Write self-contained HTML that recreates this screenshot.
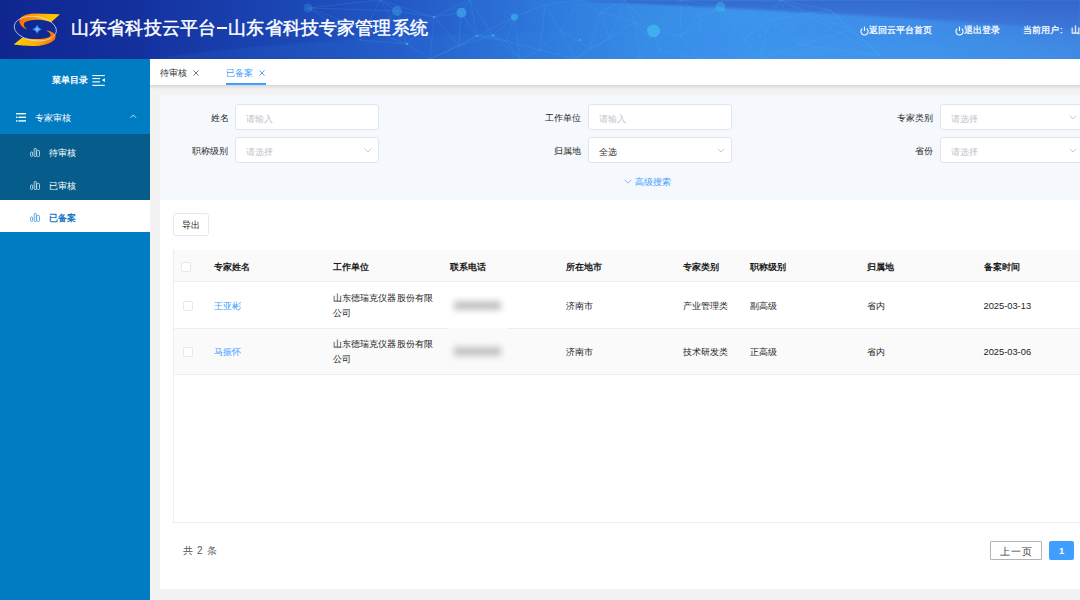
<!DOCTYPE html>
<html><head><meta charset="utf-8">
<style>
*{margin:0;padding:0;box-sizing:border-box}
html,body{width:1080px;height:600px;overflow:hidden;background:#f2f2f2;font-family:"Liberation Sans",sans-serif;color:#333}
.abs{position:absolute}
#hdr{position:absolute;left:0;top:0;width:1080px;height:59px;overflow:hidden;
 background:linear-gradient(90deg,#10288f 0%,#15339e 20%,#1d4cb6 35%,#2a6bd3 50%,#3484e2 62%,#3a82e0 75%,#3b73d6 100%)}
#title{position:absolute;left:71px;top:17px;font-size:18px;color:#fff;line-height:22px;white-space:nowrap;letter-spacing:0.15px;-webkit-text-stroke:0.45px #fff}
.dash{display:inline-block;width:12px;position:relative;height:10px}
.dash:after{content:"";position:absolute;left:0.5px;right:1px;top:2.8px;height:2.4px;background:#fff}
.hlink{position:absolute;top:23.5px;font-size:9.1px;color:#fff;line-height:12px;white-space:nowrap;-webkit-text-stroke:0.25px #fff}
#side{position:absolute;left:0;top:59px;width:150px;height:541px;background:#007cc3}
.sitem{position:absolute;left:0;width:150px;height:33px;background:#065d8b}
.stxt{position:absolute;left:49px;font-size:9.3px;line-height:12px;color:#fff;white-space:nowrap;letter-spacing:0.2px;margin-top:0.5px}
#tabs{position:absolute;left:150px;top:59px;width:930px;height:26px;background:#fff}
#tabsh{position:absolute;left:150px;top:85px;width:930px;height:4px;background:linear-gradient(#d8d8d8,#f2f2f2)}
.tab{position:absolute;top:8px;font-size:9.3px;line-height:12px;white-space:nowrap}
#search{position:absolute;left:160px;top:95px;width:930px;height:105px;background:#f5f8fc}
.lbl{position:absolute;font-size:9.3px;line-height:12px;color:#1f1f1f;white-space:nowrap;text-align:right}
.inp{position:absolute;width:143.5px;height:26px;background:#fff;border:1px solid #e2e5ec;border-radius:3px}
.ph{position:absolute;left:9.5px;top:7.5px;font-size:9.3px;line-height:12px;color:#c0c4cc;white-space:nowrap}
.chev{position:absolute;right:6px;top:10px;width:8px;height:5px}
#main{position:absolute;left:160px;top:200px;width:930px;height:389px;background:#fff}
#tbl{position:absolute;left:173px;top:249px;width:920px;height:274px;border:1px solid #eceef4;border-top:none;border-right:none}
.th{position:absolute;font-size:9.3px;line-height:12px;color:#1a1a1a;font-weight:bold;white-space:nowrap;margin-left:0.5px;margin-top:1px;letter-spacing:0.15px}
.td{position:absolute;margin-left:0.5px;margin-top:1px;font-size:9.3px;line-height:15px;color:#1c1c1c;letter-spacing:0.15px;white-space:nowrap}
.cb{position:absolute;width:9.5px;height:9.5px;border:1px solid #e6e8ec;border-radius:2px;background:#fff}
</style></head><body>
<div id="hdr">
 <svg class="abs" style="left:0;top:0" width="1080" height="59" viewBox="0 0 1080 59">
  <defs>
   <linearGradient id="hg" x1="0" y1="0" x2="1" y2="0">
    <stop offset="0" stop-color="#0f2690"/>
    <stop offset="0.12" stop-color="#13309d"/>
    <stop offset="0.26" stop-color="#1b46b4"/>
    <stop offset="0.37" stop-color="#2358c6"/>
    <stop offset="0.5" stop-color="#2e78dc"/>
    <stop offset="0.6" stop-color="#378ce6"/>
    <stop offset="0.69" stop-color="#3d94ec"/>
    <stop offset="0.85" stop-color="#3e8ce8"/>
    <stop offset="1" stop-color="#3e7edc"/>
   </linearGradient>
   <linearGradient id="topband" x1="0" y1="0" x2="0" y2="1">
    <stop offset="0" stop-color="#3260c8" stop-opacity="0.8"/>
    <stop offset="1" stop-color="#3a6ad0" stop-opacity="0.45"/>
   </linearGradient>
   <radialGradient id="glow" cx="0.5" cy="1" r="0.7">
    <stop offset="0" stop-color="#48a6f2" stop-opacity="0.5"/>
    <stop offset="1" stop-color="#48a6f2" stop-opacity="0"/>
   </radialGradient>
   <filter id="bl"><feGaussianBlur stdDeviation="1.2"/></filter><filter id="bl2" x="-50%" y="-50%" width="200%" height="200%"><feGaussianBlur stdDeviation="10"/></filter>
  </defs>
  <rect width="1080" height="59" fill="url(#hg)"/>
  <ellipse cx="720" cy="74" rx="480" ry="46" fill="url(#glow)"/><ellipse cx="960" cy="70" rx="220" ry="34" fill="#4aa2f4" fill-opacity="0.35" filter="url(#bl2)"/>
  <path d="M150 59 Q 420 20 1080 32 L1080 59 Z" fill="#3a8ee8" fill-opacity="0.12" filter="url(#bl)"/>
  <path d="M560 0 L1080 0 L1080 30 Q 850 13 560 0 Z" fill="url(#topband)" filter="url(#bl)"/>
  <g stroke="#4ccaf6" stroke-opacity="0.26" stroke-width="0.55" fill="none"><path d="M308 8 L397 11 M308 8 L407 44 M308 8 L360 40 M308 8 L380 0 M397 11 L434 17 M397 11 L407 44 M397 11 L360 40 M397 11 L380 0 M434 17 L461 12.5 M434 17 L407 44 M434 17 L459 46 M434 17 L380 0 M434 17 L430 59 M434 17 L470 0 M461 12.5 L477 36 M461 12.5 L459 46 M461 12.5 L470 0 M514 17 L493 35.5 M514 17 L477 36 M514 17 L506 41 M514 17 L545 5 M514 17 L520 59 M493 35.5 L477 36 M493 35.5 L506 41 M493 35.5 L459 46 M493 35.5 L520 59 M493 35.5 L470 0 M477 36 L506 41 M477 36 L459 46 M477 36 L430 59 M477 36 L470 0 M506 41 L520 59 M506 41 L540 50 M407 44 L360 40 M407 44 L380 0 M407 44 L430 59 M459 46 L430 59 M545 5 L560 30 M545 5 L580 0 M545 5 L540 50 M560 30 L590 48 M560 30 L575 59 M560 30 L580 0 M560 30 L540 50 M590 48 L600 12 M590 48 L575 59 M590 48 L610 38 M600 12 L625 0 M600 12 L635 22 M600 12 L580 0 M600 12 L610 38 M625 0 L635 22 M625 0 L653 31 M625 0 L580 0 M625 0 L610 38 M635 22 L653 31 M635 22 L640 59 M635 22 L610 38 M635 22 L660 50 M653 31 L681 36 M653 31 L640 59 M653 31 L680 0 M653 31 L660 50 M681 36 L700 15 M681 36 L720 7 M681 36 L700 59 M681 36 L680 0 M681 36 L660 50 M700 15 L720 7 M700 15 L700 59 M700 15 L680 0 M720 7 L745 40 M720 7 L680 0 M745 40 L770 20 M745 40 L700 59 M745 40 L760 59 M745 40 L780 0 M770 20 L800 45 M770 20 L830 10 M770 20 L760 59 M770 20 L780 0 M800 45 L830 10 M800 45 L760 59 M800 45 L780 0 M800 45 L850 30 M800 45 L880 55 M830 10 L780 0 M830 10 L850 30 M830 10 L880 55 M360 40 L380 0 M520 59 L540 50 M575 59 L540 50 M575 59 L610 38 M640 59 L610 38 M640 59 L660 50 M700 59 L760 59 M700 59 L660 50 M780 0 L850 30 M780 0 L880 55 M850 30 L880 55"/></g>
  <g fill="#42c4f2">
   <circle cx="308" cy="8" r="4.5" fill-opacity="0.22"/>
   <circle cx="397" cy="11" r="5" fill-opacity="0.3"/>
   <circle cx="461.5" cy="12.7" r="5" fill-opacity="0.5"/>
   <circle cx="514.4" cy="17" r="3.5" fill-opacity="0.5"/>
   <circle cx="653.5" cy="31" r="6.5" fill-opacity="0.6"/>
   <circle cx="720.4" cy="7" r="5" fill-opacity="0.38"/>
   <circle cx="434" cy="17" r="1" fill-opacity="0.6"/>
   <circle cx="407" cy="44" r="1.2" fill-opacity="0.6"/>
   <circle cx="477" cy="36" r="1" fill-opacity="0.6"/>
   <circle cx="493" cy="35.5" r="1.2" fill-opacity="0.6"/>
   <circle cx="580" cy="40" r="1.2" fill-opacity="0.5"/>
   <circle cx="760" cy="36" r="1.2" fill-opacity="0.4"/>
  </g>
 </svg>
 <!-- logo -->
 <svg class="abs" style="left:0;top:0" width="70" height="59" viewBox="0 0 70 59">
  <defs>
   <linearGradient id="ytop" gradientUnits="userSpaceOnUse" x1="19" y1="0" x2="58" y2="0"><stop offset="0" stop-color="#ff6a00"/><stop offset="0.3" stop-color="#ff8c00"/><stop offset="0.6" stop-color="#ffb400"/><stop offset="1" stop-color="#ffcc00"/></linearGradient>
   <linearGradient id="ybot" gradientUnits="userSpaceOnUse" x1="14" y1="0" x2="56" y2="0"><stop offset="0" stop-color="#ffcc00"/><stop offset="0.5" stop-color="#ffb000"/><stop offset="1" stop-color="#ff6a00"/></linearGradient>
   <radialGradient id="star"><stop offset="0" stop-color="#b0dcff"/><stop offset="0.25" stop-color="#58acf6"/><stop offset="1" stop-color="#1a78ea"/></radialGradient>
  </defs>
  <path d="M60 14.2 L34 13.4 C25 13.8 18.5 17 19.4 22 C20.1 25.5 24 28.5 27.6 29.8 C24.5 27.5 22.8 25 24.5 22.8 C27 20 35 19.3 42 20 C46 20.5 49 21.3 51 22.3 Z" fill="url(#ytop)"/>
  <path d="M13.7 44.6 L22 37.8 C31 39.5 42 39.5 48 37.5 C52 36 51.5 33 46 30.4 C52 31 56.5 33.5 55.5 37.5 C54.5 42 46 45.5 36 46 C28 46.3 20 45.5 13.7 44.6 Z" fill="url(#ybot)"/>
  <ellipse cx="35.3" cy="28.6" rx="21.2" ry="12.1" transform="rotate(8 35.3 28.6)" fill="none" stroke="#dfe8f5" stroke-opacity="0.8" stroke-width="0.9"/>
  <path d="M37.1 24.3 Q37.8 28.4 42.2 29.3 Q37.8 30.2 37.1 34.3 Q36.4 30.2 32 29.3 Q36.4 28.4 37.1 24.3 Z" fill="url(#star)"/>
 </svg>
 <div id="title">山东省科技云平台<span class="dash"></span>山东省科技专家管理系统</div>
 <svg class="abs" style="left:859.5px;top:26px" width="9" height="10" viewBox="0 0 9 10"><path d="M2.3 2.6 A3.6 3.6 0 1 0 6.7 2.6" stroke="#fff" stroke-width="1.1" fill="none"/><path d="M4.5 0.6 V5" stroke="#fff" stroke-width="1.1"/></svg>
 <div class="hlink" style="left:869px">返回云平台首页</div>
 <svg class="abs" style="left:954.5px;top:26px" width="9" height="10" viewBox="0 0 9 10"><path d="M2.3 2.6 A3.6 3.6 0 1 0 6.7 2.6" stroke="#fff" stroke-width="1.1" fill="none"/><path d="M4.5 0.6 V5" stroke="#fff" stroke-width="1.1"/></svg>
 <div class="hlink" style="left:964px">退出登录</div>
 <div class="hlink" style="left:1023px">当前用户<span style="display:inline-block;width:9px;position:relative"><span style="position:absolute;left:1px;top:-9px">:</span></span>&nbsp;山东省</div>
</div>

<div id="side">
 <div class="abs" style="left:52px;top:15.3px;font-size:9.3px;line-height:12px;color:#fff;font-weight:bold">菜单目录</div>
 <svg class="abs" style="left:92px;top:15px" width="14" height="13" viewBox="0 0 14 13"><g fill="#fff"><rect x="0.3" y="1" width="12.5" height="1.1"/><rect x="0.3" y="4" width="7.7" height="1.1"/><rect x="0.3" y="7.3" width="7.7" height="1.1"/><rect x="0.3" y="10.8" width="12.5" height="1.1"/><path d="M12.9 4.2 L9.9 6.1 L12.9 8Z"/></g></svg>
 <svg class="abs" style="left:16px;top:54px" width="10" height="9" viewBox="0 0 10 9">
  <g fill="#fff"><rect x="0" y="0" width="10" height="1.4"/><rect x="0" y="3.6" width="1.5" height="1.4"/><rect x="2.5" y="3.6" width="7.5" height="1.4"/><rect x="0" y="7.2" width="1.5" height="1.4"/><rect x="2.5" y="7.2" width="7.5" height="1.4"/></g>
 </svg>
 <div class="abs" style="left:34.5px;top:52.7px;font-size:9.3px;line-height:12px;color:#fff;letter-spacing:0.2px">专家审核</div>
 <svg class="abs" style="left:130px;top:54.5px" width="7" height="5" viewBox="0 0 7 5"><path d="M0.5 3.8 L3.3 0.9 L6.1 3.8" stroke="#d6ebf8" stroke-width="0.9" fill="none"/></svg>
 <div class="sitem" style="top:75px"></div>
 <div class="sitem" style="top:108px"></div>
 <div class="sitem" style="top:140.8px;height:32.4px;background:#fff"></div>
 <!-- items -->
 <svg class="abs" style="left:30px;top:89px" width="11" height="9" viewBox="0 0 11 9"><g fill="none" stroke="#cfe3f2" stroke-width="0.85"><rect x="0.6" y="3.9" width="2" height="4.6" rx="0.9"/><rect x="4.2" y="0.5" width="2.1" height="8" rx="0.6"/><rect x="6.7" y="2.4" width="2.8" height="6.1" rx="0.9"/></g></svg>
 <div class="stxt" style="top:87px">待审核</div>
 <svg class="abs" style="left:30px;top:121.5px" width="11" height="9" viewBox="0 0 11 9"><g fill="none" stroke="#cfe3f2" stroke-width="0.85"><rect x="0.6" y="3.9" width="2" height="4.6" rx="0.9"/><rect x="4.2" y="0.5" width="2.1" height="8" rx="0.6"/><rect x="6.7" y="2.4" width="2.8" height="6.1" rx="0.9"/></g></svg>
 <div class="stxt" style="top:120px">已审核</div>
 <svg class="abs" style="left:30px;top:154px" width="11" height="9" viewBox="0 0 11 9"><g fill="none" stroke="#4a9edb" stroke-width="0.85"><rect x="0.6" y="3.9" width="2" height="4.6" rx="0.9"/><rect x="4.2" y="0.5" width="2.1" height="8" rx="0.6"/><rect x="6.7" y="2.4" width="2.8" height="6.1" rx="0.9"/></g></svg>
 <div class="stxt" style="top:152.5px;color:#1777c4;font-weight:bold">已备案</div>
</div>

<div id="tabs">
 <div class="tab" style="left:10px;color:#333">待审核</div>
 <svg class="abs" style="left:43px;top:11px" width="6" height="6" viewBox="0 0 6 6"><path d="M0.4 0.4 L5.6 5.6 M5.6 0.4 L0.4 5.6" stroke="#666" stroke-width="0.9"/></svg>
 <div class="tab" style="left:76px;color:#409eff">已备案</div>
 <svg class="abs" style="left:109px;top:11px" width="6" height="6" viewBox="0 0 6 6"><path d="M0.4 0.4 L5.6 5.6 M5.6 0.4 L0.4 5.6" stroke="#409eff" stroke-width="0.9"/></svg>
 <div class="abs" style="left:76px;top:24px;width:40px;height:2px;background:#409eff"></div>
</div>
<div id="tabsh"></div>

<div id="search"></div>
<div class="lbl" style="left:210.5px;top:112px">姓名</div>
<div class="inp" style="left:235px;top:104px"><div class="ph">请输入</div></div>
<div class="lbl" style="left:192px;top:145px">职称级别</div>
<div class="inp" style="left:235px;top:137px"><div class="ph">请选择</div><svg class="chev" viewBox="0 0 8 5"><path d="M0.6 0.6 L4 4 L7.4 0.6" stroke="#b8bcc4" stroke-width="0.8" fill="none"/></svg></div>
<div class="lbl" style="left:545px;top:112px">工作单位</div>
<div class="inp" style="left:588px;top:104px"><div class="ph">请输入</div></div>
<div class="lbl" style="left:554px;top:145px">归属地</div>
<div class="inp" style="left:588px;top:137px"><div class="ph" style="color:#333">全选</div><svg class="chev" viewBox="0 0 8 5"><path d="M0.6 0.6 L4 4 L7.4 0.6" stroke="#b8bcc4" stroke-width="0.8" fill="none"/></svg></div>
<div class="lbl" style="left:897px;top:112px">专家类别</div>
<div class="inp" style="left:940px;top:104px"><div class="ph">请选择</div><svg class="chev" viewBox="0 0 8 5"><path d="M0.6 0.6 L4 4 L7.4 0.6" stroke="#b8bcc4" stroke-width="0.8" fill="none"/></svg></div>
<div class="lbl" style="left:915px;top:145px">省份</div>
<div class="inp" style="left:940px;top:137px"><div class="ph">请选择</div><svg class="chev" viewBox="0 0 8 5"><path d="M0.6 0.6 L4 4 L7.4 0.6" stroke="#b8bcc4" stroke-width="0.8" fill="none"/></svg></div>
<svg class="abs" style="left:623.5px;top:178.5px" width="8" height="5" viewBox="0 0 8 5"><path d="M0.6 0.8 L4 4.2 L7.4 0.8" stroke="#6aaef5" stroke-width="0.8" fill="none"/></svg>
<div class="abs" style="left:635px;top:175.5px;font-size:9.3px;line-height:12px;color:#409eff">高级搜索</div>

<div id="main"></div>
<div class="abs" style="left:173px;top:213px;width:36px;height:23px;border:1px solid #e6e8ee;border-radius:3px;background:#fff"></div>
<div class="abs" style="left:182px;top:218.5px;font-size:9.3px;line-height:12px;color:#1a1a1a">导出</div>

<div id="tbl"></div>
<div class="abs" style="left:174px;top:249.5px;width:906px;height:32.5px;background:#fafafa;border-bottom:1px solid #ebeef5"></div>
<div class="abs" style="left:174px;top:328px;width:906px;height:47px;background:#fafafa;border-top:1px solid #ebeef5;border-bottom:1px solid #ebeef5"></div>
<div class="cb" style="left:181px;top:262px"></div>
<div class="th" style="left:213px;top:260px">专家姓名</div>
<div class="th" style="left:332px;top:260px">工作单位</div>
<div class="th" style="left:449px;top:260px">联系电话</div>
<div class="th" style="left:565px;top:260px">所在地市</div>
<div class="th" style="left:682px;top:260px">专家类别</div>
<div class="th" style="left:749px;top:260px">职称级别</div>
<div class="th" style="left:866px;top:260px">归属地</div>
<div class="th" style="left:983px;top:260px">备案时间</div>

<div class="cb" style="left:183px;top:301px"></div>
<div class="td" style="left:213px;top:298px;color:#409eff">王亚彬</div>
<div class="td" style="left:332px;top:290px">山东德瑞克仪器股份有限<br>公司</div>
<div class="abs" style="left:447.5px;top:296px;width:59.5px;height:32px;background:#fff;overflow:hidden"><div class="abs" style="left:6px;top:5px;width:47px;height:9px;background:#c2c2c2;filter:blur(3px)"></div></div>
<div class="td" style="left:565px;top:298px">济南市</div>
<div class="td" style="left:682px;top:298px">产业管理类</div>
<div class="td" style="left:749px;top:298px">副高级</div>
<div class="td" style="left:866px;top:298px">省内</div>
<div class="td" style="left:983px;top:298px;letter-spacing:0">2025-03-13</div>

<div class="cb" style="left:183px;top:347px"></div>
<div class="td" style="left:213px;top:344px;color:#409eff">马振怀</div>
<div class="td" style="left:332px;top:336px">山东德瑞克仪器股份有限<br>公司</div>
<div class="abs" style="left:447.5px;top:328px;width:59.5px;height:35px;background:#fafafa;overflow:hidden"><div class="abs" style="left:6px;top:19px;width:47px;height:9px;background:#c2c2c2;filter:blur(3px)"></div></div>
<div class="td" style="left:565px;top:344px">济南市</div>
<div class="td" style="left:682px;top:344px">技术研发类</div>
<div class="td" style="left:749px;top:344px">正高级</div>
<div class="td" style="left:866px;top:344px">省内</div>
<div class="td" style="left:983px;top:344px;letter-spacing:0">2025-03-06</div>

<div class="abs" style="left:183px;top:545px;font-size:10px;line-height:12px;color:#5a5a5a;letter-spacing:0.6px">共 2 条</div>
<div class="abs" style="left:990px;top:541px;width:52px;height:19px;border:1px solid #b4b4b4;border-radius:1px;background:#fff;font-size:10px;line-height:19px;text-align:center;color:#3a3a3a;letter-spacing:0.6px;text-indent:0.6px">上一页</div>
<div class="abs" style="left:1049px;top:541px;width:25px;height:18.5px;background:#409eff;border-radius:2px;font-size:9.3px;line-height:20px;text-align:center;color:#fff;font-weight:bold">1</div>
</body></html>
